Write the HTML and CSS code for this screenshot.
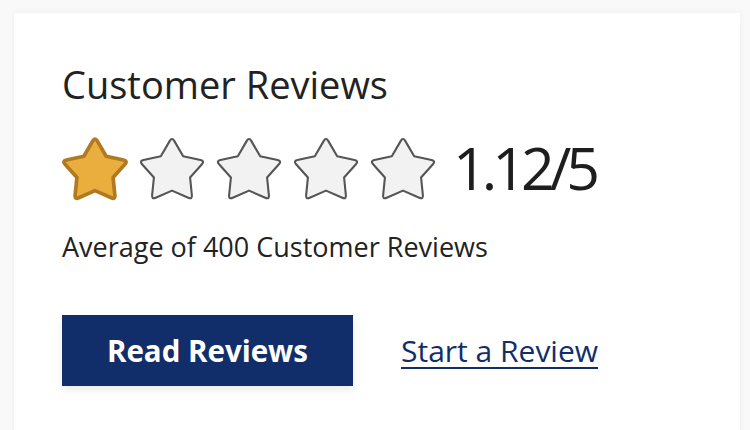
FILE: index.html
```html
<!DOCTYPE html>
<html lang="en">
<head>
    <meta charset="UTF-8">
    <meta name="viewport" content="width=device-width, initial-scale=1.0">
    <title>Customer Reviews</title>
    <link rel="stylesheet" href="styles.css">
</head>
<body>
    <svg class="defs" width="0" height="0">
        <symbol id="star-shape" viewBox="1.5 1.5 63 61">
            <path d="M30.87,5.16 Q33,1.5 35.13,5.16 L43.67,19.82 L60.24,23.40 Q64.38,24.30 61.56,27.46 L50.26,40.11 L51.97,56.98 Q52.40,61.20 48.52,59.49 L33,52.65 L17.48,59.49 Q13.60,61.20 14.03,56.98 L15.74,40.11 L4.44,27.46 Q1.62,24.30 5.76,23.40 L22.33,19.82 Z"/>
        </symbol>
    </svg>
    <div class="review-card">
        <h2 class="review-title">Customer Reviews</h2>
        <div class="rating-row">
            <div class="stars">
                <svg class="star star-full"><use href="#star-shape"/></svg>
                <svg class="star"><use href="#star-shape"/></svg>
                <svg class="star"><use href="#star-shape"/></svg>
                <svg class="star"><use href="#star-shape"/></svg>
                <svg class="star"><use href="#star-shape"/></svg>
            </div>
            <span class="rating-score">1.12/5</span>
        </div>
        <p class="rating-count">Average of 400 Customer Reviews</p>
        <div class="review-actions">
            <button class="btn-read" type="button">Read Reviews</button>
            <a class="link-start" href="#">Start a Review</a>
        </div>
    </div>
</body>
</html>
```

FILE: styles.css
```css
* {
    margin: 0;
    padding: 0;
    box-sizing: border-box;
}
body {
    font-family: 'Open Sans', 'Liberation Sans', sans-serif;
    background: #f9f9f9;
    padding: 13px 10px 0 14px;
    height: 100vh;
    overflow: hidden;
}
.defs {
    position: absolute;
    width: 0;
    height: 0;
}
.review-card {
    background: white;
    width: 726px;
    height: 430px;
    padding: 49px 48px 0 48px;
    box-shadow: 0 0 6px rgba(0, 0, 0, 0.06);
}
.review-title {
    font-size: 38px;
    font-weight: 400;
    color: #222;
    line-height: 44px;
}
.rating-row {
    display: flex;
    align-items: center;
    margin-top: 31px;
    height: 64px;
}
.stars {
    display: flex;
    gap: 11px;
}
.star {
    width: 66px;
    height: 64px;
    display: block;
    overflow: visible;
    fill: #f2f2f2;
    stroke: #555;
    stroke-width: 2;
    stroke-linejoin: round;
}
.star-full {
    fill: #e9ae3e;
    stroke: #b27a20;
    stroke-width: 3.5;
}
.rating-score {
    font-size: 59px;
    color: #1e1e1e;
    margin-left: 17px;
    margin-bottom: 4px;
    line-height: 60px;
    letter-spacing: -5px;
}
.rating-count {
    font-size: 27px;
    color: #222;
    margin-top: 30px;
    line-height: 32px;
}
.review-actions {
    display: flex;
    align-items: center;
    gap: 48px;
    margin-top: 52px;
}
.btn-read {
    background: #112e6a;
    color: white;
    width: 291px;
    height: 71px;
    border: none;
    font-family: inherit;
    font-size: 29.5px;
    font-weight: bold;
    box-shadow: 0 4px 8px rgba(0, 0, 0, 0.08);
    cursor: pointer;
}
.link-start {
    color: #112e6a;
    font-size: 30px;
    text-decoration: underline;
    text-decoration-thickness: 2px;
    text-underline-offset: 5px;
}
```
